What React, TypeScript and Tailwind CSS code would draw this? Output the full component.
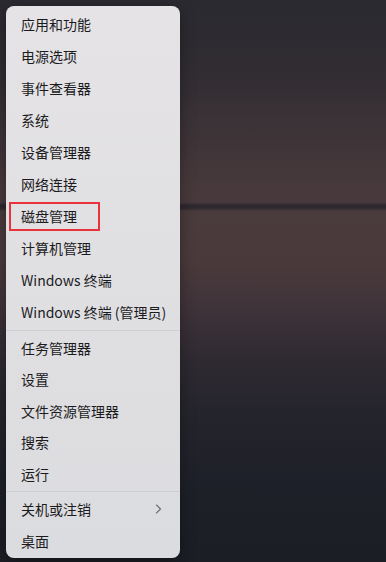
import React from "react";

type Item = { label: string; marked?: boolean; submenu?: boolean };

const groupA: Item[] = [
  { label: "应用和功能" },
  { label: "电源选项" },
  { label: "事件查看器" },
  { label: "系统" },
  { label: "设备管理器" },
  { label: "网络连接" },
  { label: "磁盘管理", marked: true },
  { label: "计算机管理" },
  { label: "Windows 终端" },
  { label: "Windows 终端 (管理员)" },
];

const groupB: Item[] = [
  { label: "任务管理器" },
  { label: "设置" },
  { label: "文件资源管理器" },
  { label: "搜索" },
  { label: "运行" },
];

const groupC: Item[] = [{ label: "关机或注销", submenu: true }, { label: "桌面" }];

const Chevron = () => (
  <svg width="7" height="10" viewBox="0 0 7 10" fill="none" className="shrink-0">
    <path d="M1.5 1 L5.5 5 L1.5 9" stroke="#6f6f73" strokeWidth="1.1" strokeLinecap="round" strokeLinejoin="round" />
  </svg>
);

const MenuRow = ({ item, tall }: { item: Item; tall?: boolean }) => (
  <div
    className={`relative flex items-center justify-between pl-[15px] pr-[18px] text-[14px] text-[#1b1b1d] ${
      tall ? "h-8" : "h-[31.5px]"
    }`}
  >
    <span className="whitespace-nowrap leading-none">{item.label}</span>
    {item.submenu && <Chevron />}
    {item.marked && (
      <div className="absolute left-[3px] top-[2px] h-[29px] w-[91px] border-2 border-[#e8333c]" />
    )}
  </div>
);

const Divider = () => (
  <div className="flex h-1 items-center">
    <div className="h-px w-full bg-[#cfcfd2]" />
  </div>
);

export default function App() {
  return (
    <div
      className="h-[562px] w-[386px] overflow-hidden pl-[6px] pt-[6px] bg-[linear-gradient(180deg,#2a2a30_0%,#302c32_12%,#3e3438_25%,#483a3c_34%,#483a3c_36%,#2e292e_36.5%,#2e292e_37%,#4a3b3c_37.6%,#4b3a3b_46%,#40343a_54%,#2f2a32_64%,#24242c_74%,#1e2029_86%,#1c1e25_100%)]"
      style={{ fontFamily: '"Segoe UI", "Noto Sans CJK SC", "Noto Sans", sans-serif' }}
    >
      <div className="h-[552px] w-[174px] rounded-lg bg-[linear-gradient(180deg,#e5e3e6_0%,#e0dfe2_50%,#dbdcdf_100%)] pt-[2px] shadow-[0_4px_16px_rgba(0,0,0,0.35)]">
        {groupA.map((it) => (
          <MenuRow key={it.label} item={it} tall />
        ))}
        <Divider />
        {groupB.map((it) => (
          <MenuRow key={it.label} item={it} />
        ))}
        <Divider />
        {groupC.map((it) => (
          <MenuRow key={it.label} item={it} />
        ))}
      </div>
    </div>
  );
}
